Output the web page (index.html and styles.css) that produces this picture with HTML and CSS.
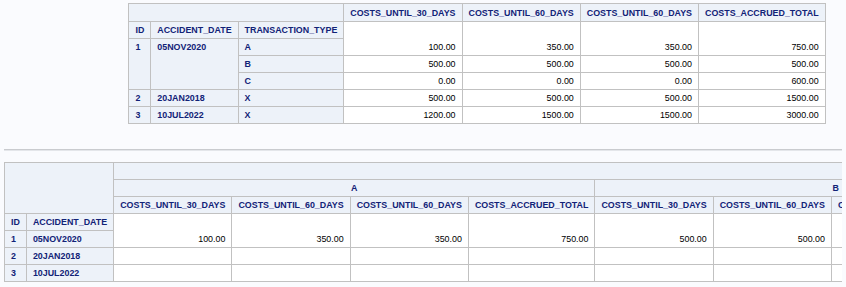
FILE: index.html
```html
<!DOCTYPE html>
<html>
<head>
<meta charset="utf-8">
<link rel="stylesheet" href="styles.css">
</head>
<body>
<div class="page">
  <div class="block">
    <table class="table">
      <tr class="toprow">
        <th class="header" colspan="3"></th>
        <th class="header">COSTS_UNTIL_30_DAYS</th>
        <th class="header">COSTS_UNTIL_60_DAYS</th>
        <th class="header">COSTS_UNTIL_60_DAYS</th>
        <th class="header">COSTS_ACCRUED_TOTAL</th>
      </tr>
      <tr>
        <th class="header l">ID</th>
        <th class="header l">ACCIDENT_DATE</th>
        <th class="header l">TRANSACTION_TYPE</th>
        <td class="data b" rowspan="2">100.00</td>
        <td class="data b" rowspan="2">350.00</td>
        <td class="data b" rowspan="2">350.00</td>
        <td class="data b" rowspan="2">750.00</td>
      </tr>
      <tr>
        <th class="rowheader" rowspan="3">1</th>
        <th class="rowheader" rowspan="3">05NOV2020</th>
        <th class="rowheader">A</th>
      </tr>
      <tr>
        <th class="rowheader">B</th>
        <td class="data">500.00</td>
        <td class="data">500.00</td>
        <td class="data">500.00</td>
        <td class="data">500.00</td>
      </tr>
      <tr>
        <th class="rowheader">C</th>
        <td class="data">0.00</td>
        <td class="data">0.00</td>
        <td class="data">0.00</td>
        <td class="data">600.00</td>
      </tr>
      <tr>
        <th class="rowheader">2</th>
        <th class="rowheader">20JAN2018</th>
        <th class="rowheader">X</th>
        <td class="data">500.00</td>
        <td class="data">500.00</td>
        <td class="data">500.00</td>
        <td class="data">1500.00</td>
      </tr>
      <tr>
        <th class="rowheader">3</th>
        <th class="rowheader">10JUL2022</th>
        <th class="rowheader">X</th>
        <td class="data">1200.00</td>
        <td class="data">1500.00</td>
        <td class="data">1500.00</td>
        <td class="data">3000.00</td>
      </tr>
    </table>
  </div>

  <hr class="pagebreak">

  <div class="block left">
    <table class="table">
      <tr>
        <th class="header" colspan="2" rowspan="3"></th>
        <th class="header" colspan="16"></th>
      </tr>
      <tr>
        <th class="header" colspan="4">A</th>
        <th class="header" colspan="4">B</th>
        <th class="header" colspan="4">C</th>
        <th class="header" colspan="4">X</th>
      </tr>
      <tr>
        <th class="header">COSTS_UNTIL_30_DAYS</th>
        <th class="header">COSTS_UNTIL_60_DAYS</th>
        <th class="header">COSTS_UNTIL_60_DAYS</th>
        <th class="header">COSTS_ACCRUED_TOTAL</th>
        <th class="header">COSTS_UNTIL_30_DAYS</th>
        <th class="header">COSTS_UNTIL_60_DAYS</th>
        <th class="header">COSTS_UNTIL_60_DAYS</th>
        <th class="header">COSTS_ACCRUED_TOTAL</th>
        <th class="header">COSTS_UNTIL_30_DAYS</th>
        <th class="header">COSTS_UNTIL_60_DAYS</th>
        <th class="header">COSTS_UNTIL_60_DAYS</th>
        <th class="header">COSTS_ACCRUED_TOTAL</th>
        <th class="header">COSTS_UNTIL_30_DAYS</th>
        <th class="header">COSTS_UNTIL_60_DAYS</th>
        <th class="header">COSTS_UNTIL_60_DAYS</th>
        <th class="header">COSTS_ACCRUED_TOTAL</th>
      </tr>
      <tr>
        <th class="header l">ID</th>
        <th class="header l">ACCIDENT_DATE</th>
        <td class="data b" rowspan="2">100.00</td>
        <td class="data b" rowspan="2">350.00</td>
        <td class="data b" rowspan="2">350.00</td>
        <td class="data b" rowspan="2">750.00</td>
        <td class="data b" rowspan="2">500.00</td>
        <td class="data b" rowspan="2">500.00</td>
        <td class="data b" rowspan="2">500.00</td>
        <td class="data b" rowspan="2">500.00</td>
        <td class="data b" rowspan="2">0.00</td>
        <td class="data b" rowspan="2">0.00</td>
        <td class="data b" rowspan="2">0.00</td>
        <td class="data b" rowspan="2">600.00</td>
        <td class="data b" rowspan="2"></td>
        <td class="data b" rowspan="2"></td>
        <td class="data b" rowspan="2"></td>
        <td class="data b" rowspan="2"></td>
      </tr>
      <tr>
        <th class="rowheader">1</th>
        <th class="rowheader">05NOV2020</th>
      </tr>
      <tr>
        <th class="rowheader">2</th>
        <th class="rowheader">20JAN2018</th>
        <td class="data"></td><td class="data"></td><td class="data"></td><td class="data"></td>
        <td class="data"></td><td class="data"></td><td class="data"></td><td class="data"></td>
        <td class="data"></td><td class="data"></td><td class="data"></td><td class="data"></td>
        <td class="data">500.00</td><td class="data">500.00</td><td class="data">500.00</td><td class="data">1500.00</td>
      </tr>
      <tr>
        <th class="rowheader">3</th>
        <th class="rowheader">10JUL2022</th>
        <td class="data"></td><td class="data"></td><td class="data"></td><td class="data"></td>
        <td class="data"></td><td class="data"></td><td class="data"></td><td class="data"></td>
        <td class="data"></td><td class="data"></td><td class="data"></td><td class="data"></td>
        <td class="data">1200.00</td><td class="data">1500.00</td><td class="data">1500.00</td><td class="data">3000.00</td>
      </tr>
    </table>
  </div>
</div>
</body>
</html>
```
FILE: styles.css
```css
html, body {
  overflow: hidden;
}
body {
  margin: 3px 4px;
  background: #fafbfe;
  font-family: "Liberation Sans", Arial, Helvetica, sans-serif;
  font-size: 8.9px;
}
.page {
  width: 946px;
}
.block {
  display: flex;
  justify-content: center;
}
.block.left {
  justify-content: flex-start;
}
.table {
  border-collapse: collapse;
  border: 1px solid #c1c1c1;
  background: #ffffff;
}
.table th,
.table td {
  border: 1px solid #c1c1c1;
  padding: 3px 6px;
  line-height: 10px;
  height: 10px;
  white-space: nowrap;
  font-size: 8.9px;
}
.toprow th {
  padding-top: 4px;
}
.header {
  background: #edf2f9;
  color: #112277;
  font-weight: bold;
  text-align: center;
  vertical-align: bottom;
}
.header.l {
  text-align: left;
}
.rowheader {
  background: #edf2f9;
  color: #112277;
  font-weight: bold;
  text-align: left;
  vertical-align: top;
}
.data {
  background: #ffffff;
  color: #000000;
  text-align: right;
  vertical-align: top;
}
.data.b {
  vertical-align: bottom;
}
.pagebreak {
  margin: 25px 0 11px;
  width: 100%;
  height: 0;
  border: 0;
  border-top: 1px solid #c9cbcf;
  border-bottom: 1px solid #e4e6ea;
}
```
